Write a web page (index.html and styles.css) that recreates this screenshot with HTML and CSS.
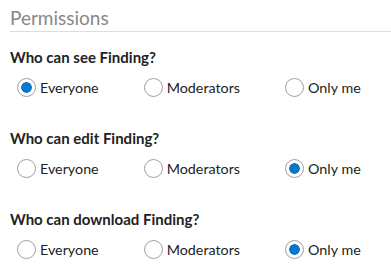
FILE: index.html
```html
<!DOCTYPE html>
<html lang="en">
<head>
    <meta charset="UTF-8">
    <title>Permissions</title>
    <link rel="stylesheet" href="styles.css">
</head>
<body>
    <div class="panel">
        <h3 class="panel-title">Permissions</h3>

        <div class="perm-group">
            <div class="perm-label">Who can see Finding?</div>
            <div class="radio-row">
                <label><input type="radio" name="see" value="everyone" checked> Everyone</label>
                <label><input type="radio" name="see" value="moderators"> Moderators</label>
                <label><input type="radio" name="see" value="me"> Only me</label>
            </div>
        </div>

        <div class="perm-group">
            <div class="perm-label">Who can edit Finding?</div>
            <div class="radio-row">
                <label><input type="radio" name="edit" value="everyone"> Everyone</label>
                <label><input type="radio" name="edit" value="moderators"> Moderators</label>
                <label><input type="radio" name="edit" value="me" checked> Only me</label>
            </div>
        </div>

        <div class="perm-group">
            <div class="perm-label">Who can download Finding?</div>
            <div class="radio-row">
                <label><input type="radio" name="download" value="everyone"> Everyone</label>
                <label><input type="radio" name="download" value="moderators"> Moderators</label>
                <label><input type="radio" name="download" value="me" checked> Only me</label>
            </div>
        </div>
    </div>
</body>
</html>
```

FILE: styles.css
```css
body {
    margin: 0;
    font-family: Lato, "Open Sans", sans-serif;
    background: #fff;
    color: #222;
}
.panel {
    padding-left: 10px;
}
.panel-title {
    margin: 0;
    padding-top: 6px;
    padding-bottom: 2px;
    font-size: 19px;
    line-height: 23px;
    font-weight: 400;
    color: #888;
    border-bottom: 1px solid #ddd;
}
.perm-group {
    margin-top: 32px;
}
.panel-title + .perm-group {
    margin-top: 16px;
}
.perm-label {
    font-size: 15px;
    line-height: 18px;
    font-weight: 700;
    color: #222;
}
.radio-row {
    display: flex;
    gap: 45px;
    margin-top: 12px;
    padding-left: 7px;
}
.radio-row label {
    display: flex;
    align-items: center;
    gap: 4px;
    font-size: 14.3px;
    line-height: 19px;
    color: #222;
    cursor: pointer;
}
.radio-row input {
    appearance: none;
    -webkit-appearance: none;
    width: 19px;
    height: 19px;
    margin: 0;
    border: 1px solid #a0a0a0;
    border-radius: 50%;
    background: #fff;
}
.radio-row input:checked {
    background: radial-gradient(circle, #0a78c8 0 5px, #fff 5.6px);
}
```
